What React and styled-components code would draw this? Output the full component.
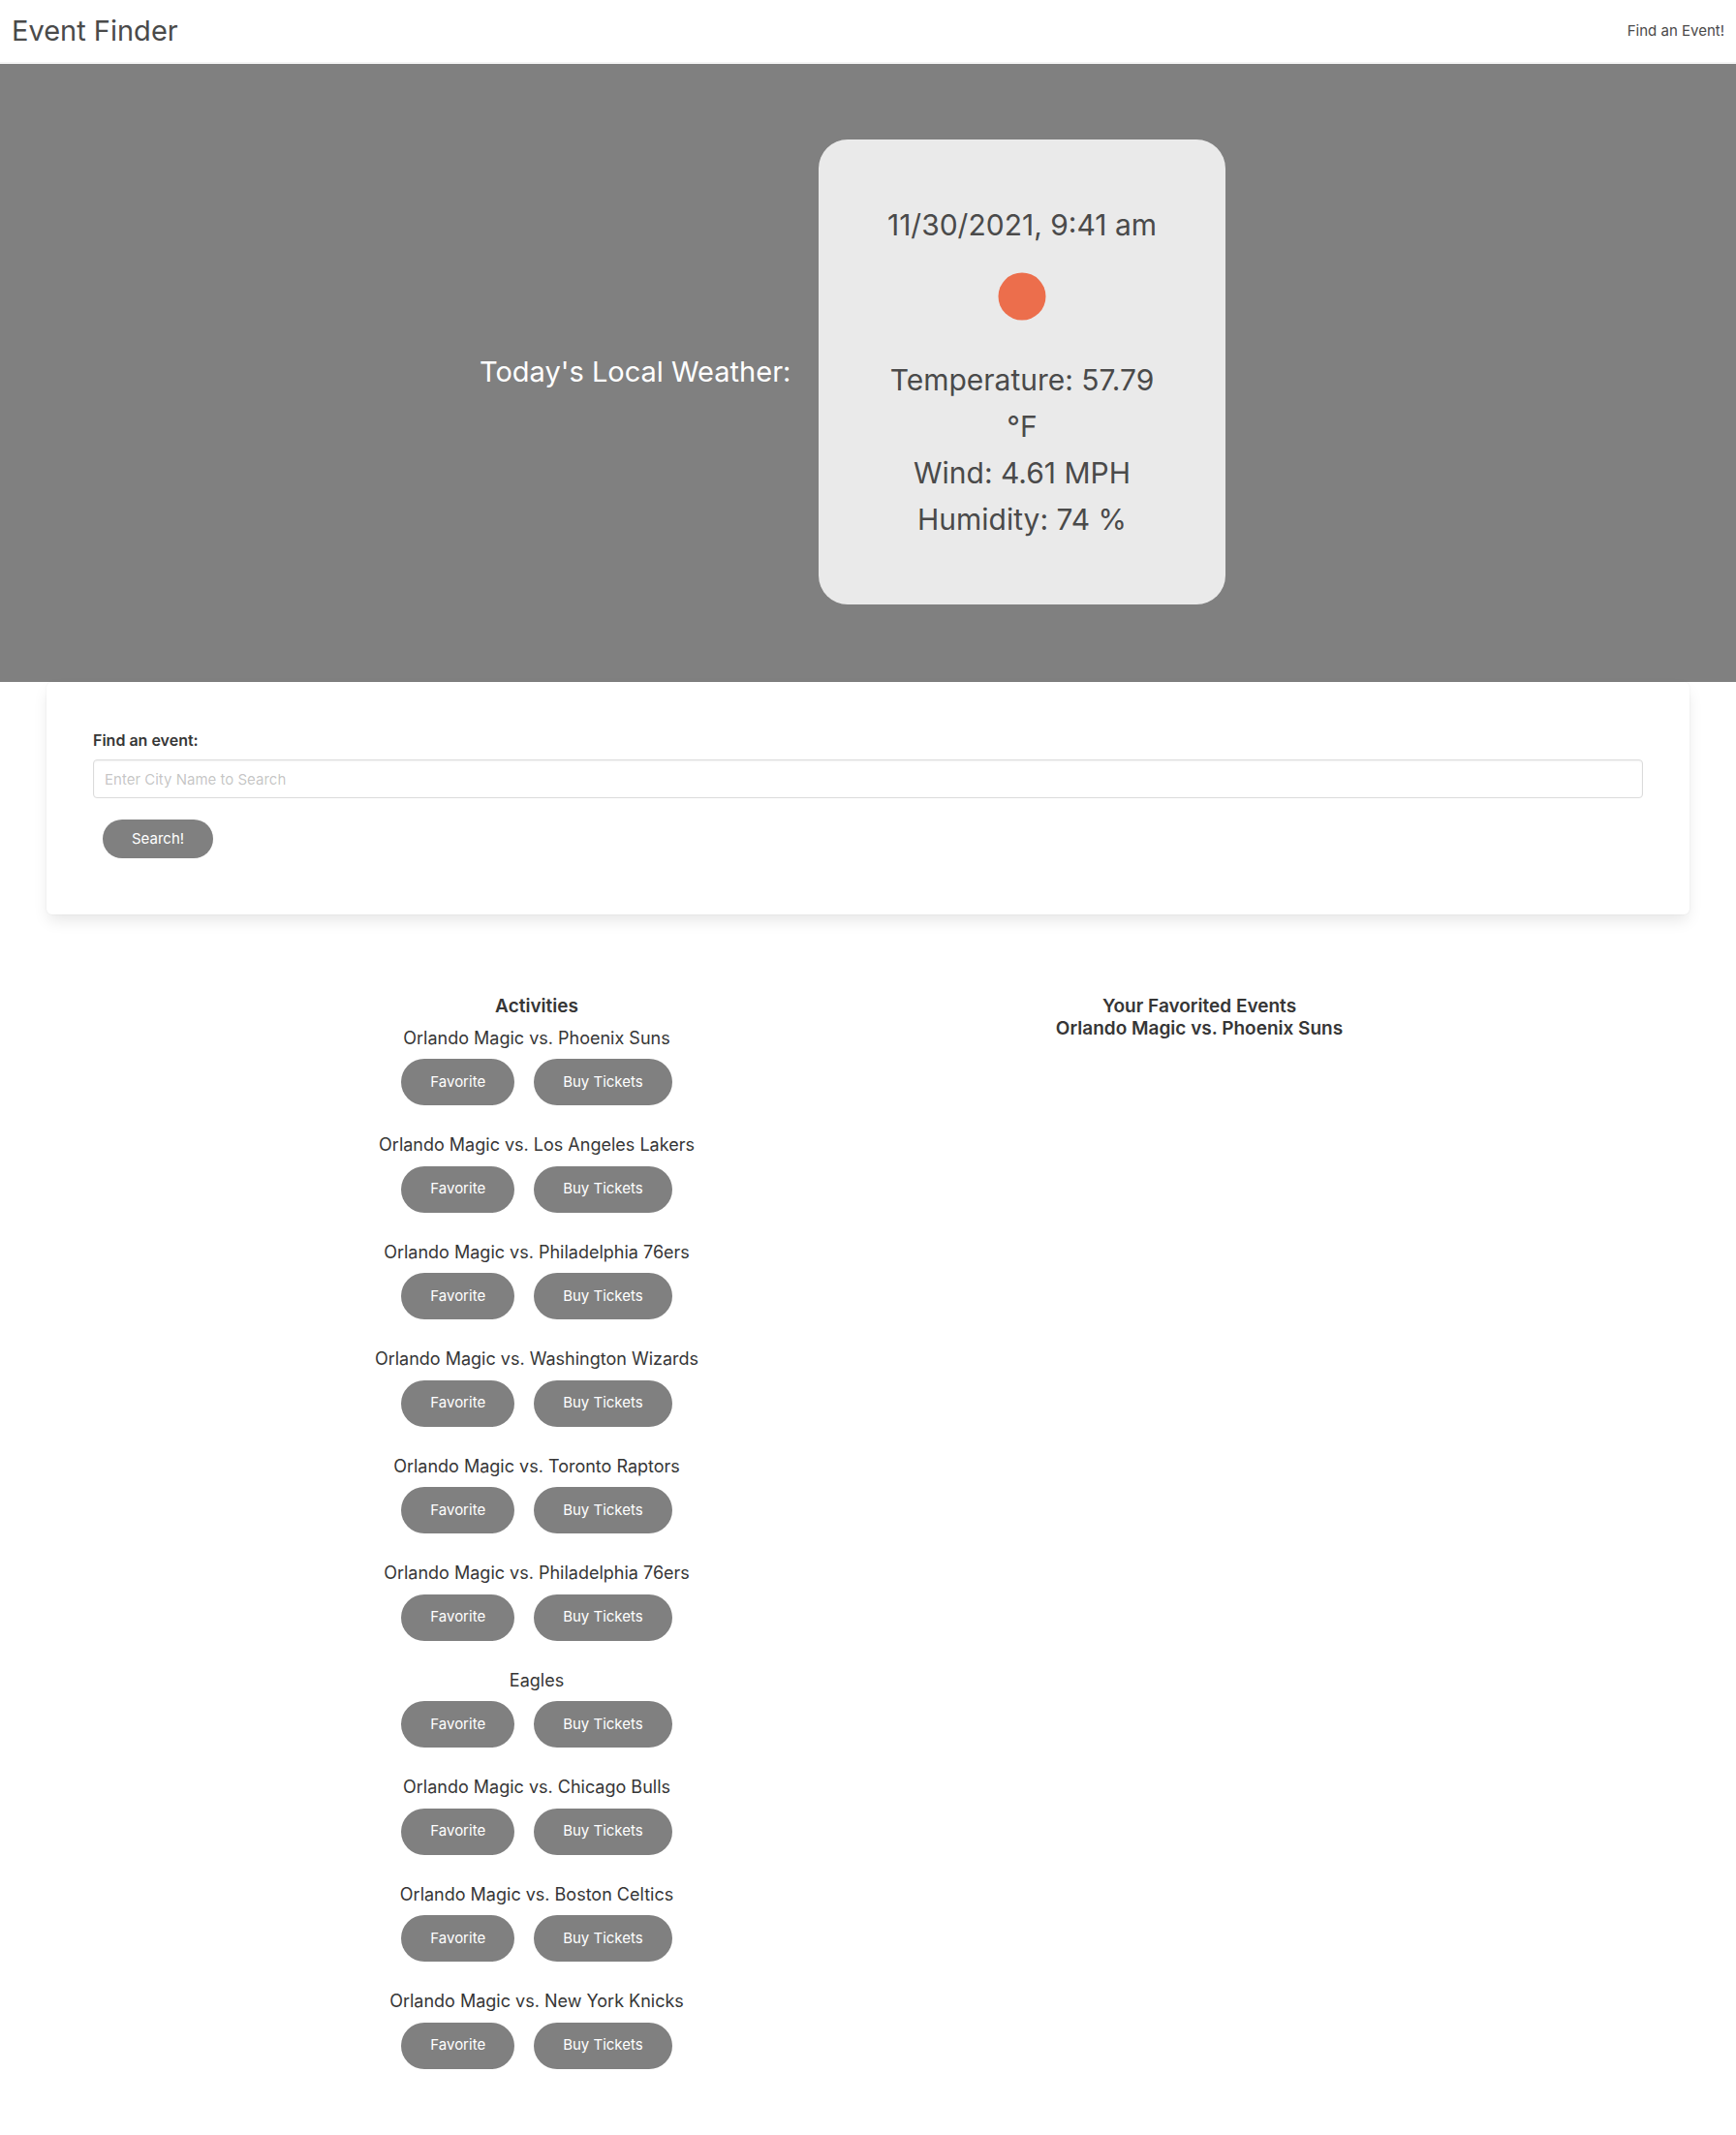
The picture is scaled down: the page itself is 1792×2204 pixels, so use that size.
import React, { useState } from "react";
import styled, { createGlobalStyle } from "styled-components";

const GlobalStyle = createGlobalStyle`
  *, *::before, *::after { box-sizing: border-box; }
  body {
    margin: 0;
    background: #fff;
    color: #4a4a4a;
    font-family: Inter, "Liberation Sans", sans-serif;
    font-size: 15px;
    line-height: 24px;
  }
  h1, h2, h3, p, ul { margin: 0; padding: 0; font-weight: 400; }
  ul { list-style: none; }
  button, input { font: inherit; }
`;

const Navbar = styled.nav`
  position: relative;
  z-index: 1;
  display: flex;
  align-items: center;
  justify-content: space-between;
  min-height: 64px;
  padding: 8px 12px;
  background: #fff;
  box-shadow: 0 2px 0 #f5f5f5;
`;

const Brand = styled.h1`
  font-size: 29px;
  line-height: 48px;
`;

const NavLink = styled.a`
  color: #4a4a4a;
  text-decoration: none;
`;

const Hero = styled.section`
  display: flex;
  justify-content: center;
  padding: 80px 24px;
  background: #808080;
  line-height: 48px;
`;

const HeroContent = styled.div`
  display: flex;
  align-items: center;
  width: 100%;
  max-width: 802px;
`;

const HeroTitle = styled.h2`
  flex: 1;
  color: #fff;
  font-size: 29px;
`;

const WeatherCard = styled.div`
  flex: 0 1 420px;
  margin-right: 32px;
  padding: 64px;
  border-radius: 30px;
  background: #eaeaea;
  font-size: 30px;
  text-align: center;
`;

const WeatherIcon = styled.svg`
  display: block;
  width: 100px;
  height: 100px;
  margin: 0 auto 12px;
`;

const SearchBox = styled.form`
  margin: 0 48px;
  padding: 48px;
  border-radius: 6px;
  background: #fff;
  box-shadow: 0 8px 16px -2px rgba(10, 10, 10, 0.1), 0 0 0 1px rgba(10, 10, 10, 0.02);
`;

const Label = styled.label`
  display: block;
  margin-bottom: 8px;
  color: #363636;
  font-size: 16px;
  font-weight: 600;
`;

const Input = styled.input`
  display: block;
  width: 100%;
  height: 40px;
  padding: 0 11px;
  border: 1px solid #dbdbdb;
  border-radius: 4px;
  background: #fff;
  box-shadow: inset 0 1px 2px rgba(10, 10, 10, 0.05);
  color: #363636;
  &::placeholder { color: rgba(54, 54, 54, 0.3); }
`;

const PillButton = styled.button`
  height: ${(p) => (p.$compact ? 40 : 48)}px;
  padding: 0 30px;
  border: 0;
  border-radius: 24px;
  background: #808080;
  color: #fff;
  cursor: pointer;
`;

const SearchActions = styled.div`
  padding: 22px 10px 10px;
`;

const Columns = styled.main`
  display: grid;
  grid-template-columns: 1fr 1fr;
  max-width: 1368px;
  margin: 0 auto;
  padding: 84px 0 38px;
  color: #363636;
  font-size: 20px;
  line-height: 1.125em;
  text-align: center;
`;

const ColumnTitle = styled.h2`
  font-size: 19px;
  font-weight: 600;
`;

const FavoriteName = styled.li`
  font-size: 19px;
  font-weight: 600;
`;

const ActivityList = styled.ul`
  padding-top: 10px;
`;

const Activity = styled.li`
  padding-bottom: 30px;
`;

const ActivityName = styled.h3`
  font-size: 18px;
`;

const ActivityActions = styled.div`
  display: flex;
  justify-content: center;
  gap: 20px;
  padding-top: 10px;
  font-size: 15px;
`;

const activities = [
  "Orlando Magic vs. Phoenix Suns",
  "Orlando Magic vs. Los Angeles Lakers",
  "Orlando Magic vs. Philadelphia 76ers",
  "Orlando Magic vs. Washington Wizards",
  "Orlando Magic vs. Toronto Raptors",
  "Orlando Magic vs. Philadelphia 76ers",
  "Eagles",
  "Orlando Magic vs. Chicago Bulls",
  "Orlando Magic vs. Boston Celtics",
  "Orlando Magic vs. New York Knicks",
];

export default function App() {
  const [favorites, setFavorites] = useState([activities[0]]);
  const addFavorite = (name) =>
    setFavorites((list) => (list.includes(name) ? list : [...list, name]));

  return (
    <>
      <GlobalStyle />
      <Navbar>
        <Brand>Event Finder</Brand>
        <NavLink href="#search">Find an Event!</NavLink>
      </Navbar>
      <Hero>
        <HeroContent>
          <HeroTitle>Today's Local Weather:</HeroTitle>
          <WeatherCard>
            <p>11/30/2021, 9:41 am</p>
            <WeatherIcon viewBox="0 0 100 100" role="img" aria-hidden="true">
              <circle cx="50" cy="50" r="24.5" fill="#ec6e4c" />
            </WeatherIcon>
            <p>Temperature: 57.79 °F</p>
            <p>Wind: 4.61 MPH</p>
            <p>Humidity: 74 %</p>
          </WeatherCard>
        </HeroContent>
      </Hero>
      <SearchBox id="search" onSubmit={(e) => e.preventDefault()}>
        <Label htmlFor="city">Find an event:</Label>
        <Input id="city" type="text" placeholder="Enter City Name to Search" />
        <SearchActions>
          <PillButton $compact type="submit">Search!</PillButton>
        </SearchActions>
      </SearchBox>
      <Columns>
        <section>
          <ColumnTitle>Activities</ColumnTitle>
          <ActivityList>
            {activities.map((name, i) => (
              <Activity key={i}>
                <ActivityName>{name}</ActivityName>
                <ActivityActions>
                  <PillButton type="button" onClick={() => addFavorite(name)}>Favorite</PillButton>
                  <PillButton type="button">Buy Tickets</PillButton>
                </ActivityActions>
              </Activity>
            ))}
          </ActivityList>
        </section>
        <section>
          <ColumnTitle>Your Favorited Events</ColumnTitle>
          <ul>
            {favorites.map((name) => (
              <FavoriteName key={name}>{name}</FavoriteName>
            ))}
          </ul>
        </section>
      </Columns>
    </>
  );
}
